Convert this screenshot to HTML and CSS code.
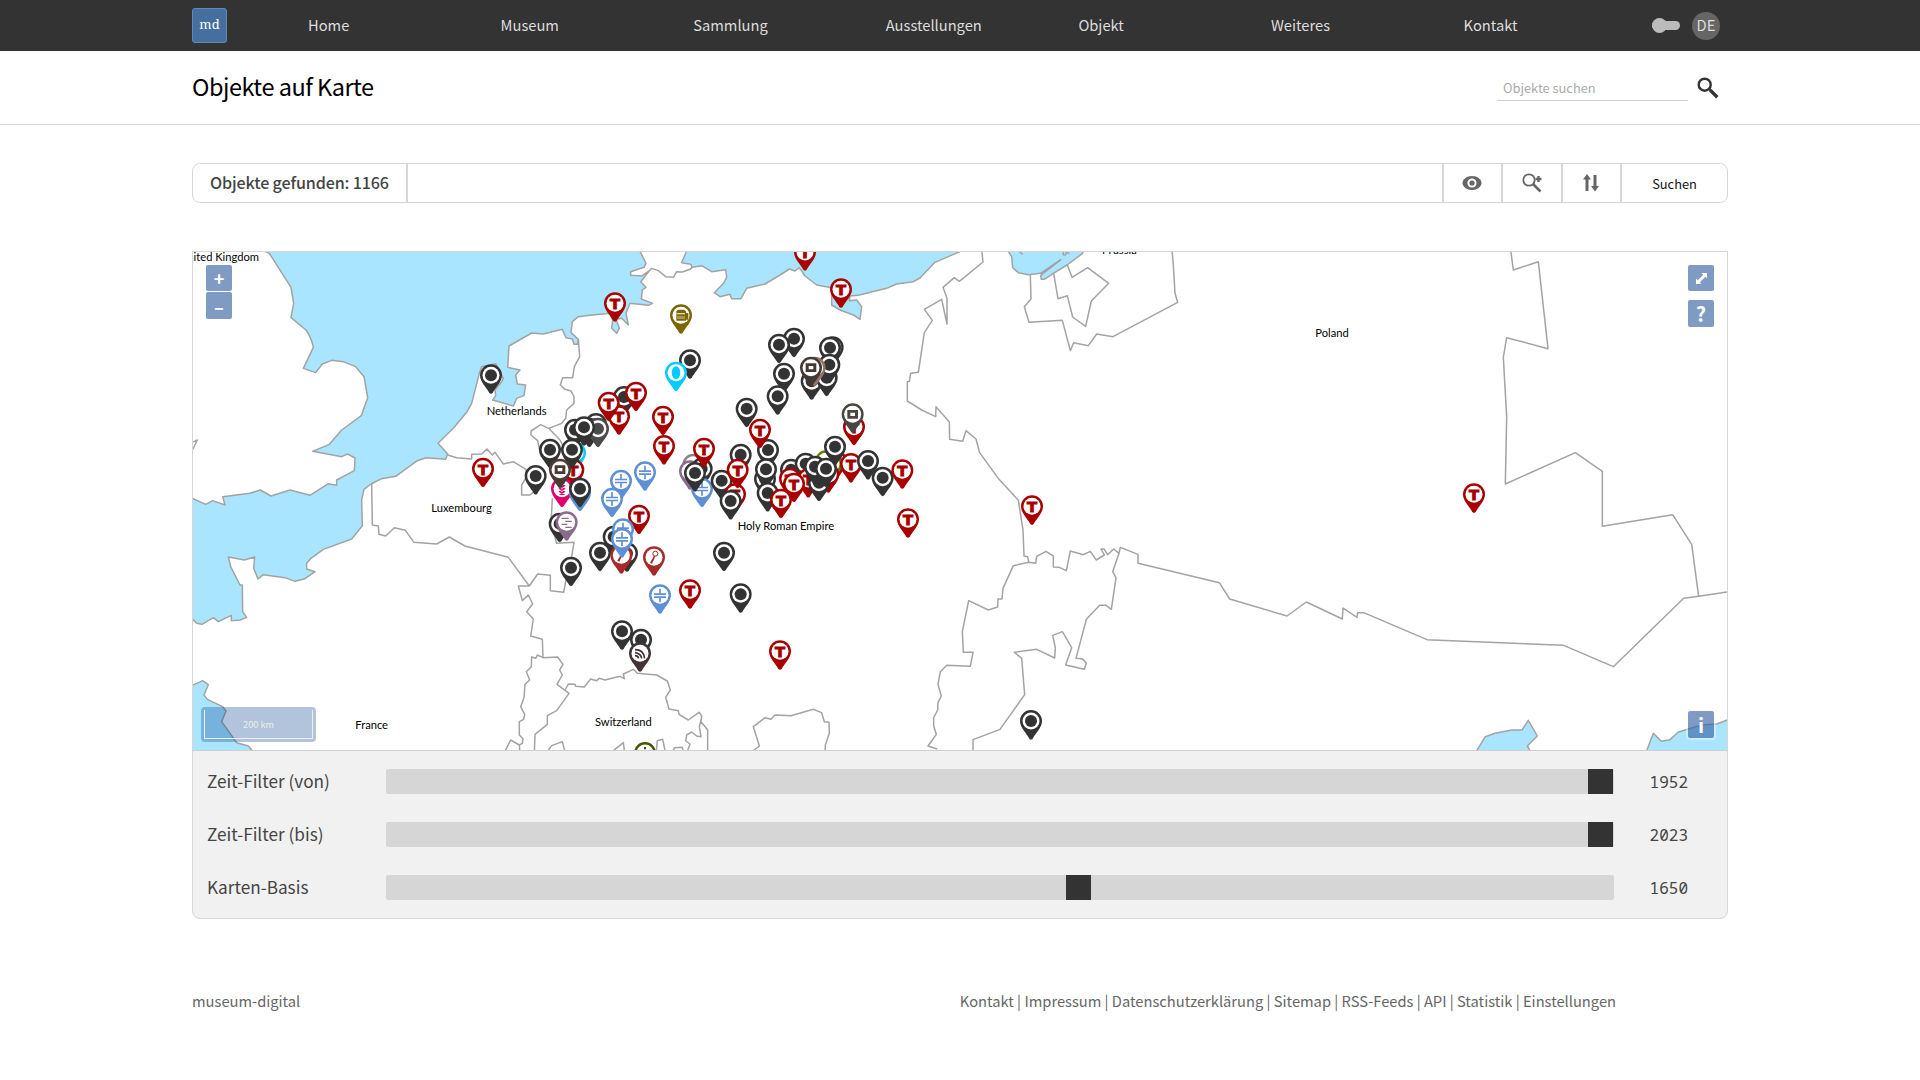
FILE: index.html
```html
<!DOCTYPE html>
<html lang="de">
<head>
<meta charset="utf-8">
<title>Objekte auf Karte</title>
<link rel="stylesheet" href="styles.css">
</head>
<body>
<header class="topbar">
  <a class="logo">md</a>
  <nav class="nav"><a>Home</a><a>Museum</a><a>Sammlung</a><a>Ausstellungen</a><a>Objekt</a><a>Weiteres</a><a>Kontakt</a></nav>
  <div class="tools"><span class="toggle"></span><span class="lang">DE</span></div>
</header>
<section class="titlebar">
  <h1>Objekte auf Karte</h1>
  <form class="quick"><input type="text" placeholder="Objekte suchen">
    <svg class="quick-icon" width="22" height="22" viewBox="0 0 22 22" fill="none" stroke="#333"><circle cx="7.7" cy="7.7" r="6" stroke-width="2.4"/><path d="M12 12l2 2" stroke-width="2.2"/><path d="M13.3 13.3l7 7" stroke-width="3.4"/></svg>
  </form>
</section>
<main class="main">
  <div class="searchbar">
    <div class="count">Objekte gefunden: 1166</div>
    <div class="field"></div>
    <div class="tool"><svg width="20" height="16" viewBox="0 0 20 16"><path fill="#666" d="M10 1C4.500 1 .5 4.500.5 8s4 7 9.500 7 9.500-3.500 9.500-7-4-7-9.500-7z"/><circle cx="10" cy="8" r="4.600" fill="#fff"/><circle cx="10" cy="8" r="2.600" fill="#666"/></svg></div>
    <div class="tool"><svg width="20" height="20" viewBox="0 0 20 20" fill="none" stroke="#666"><circle cx="7" cy="7" r="5.700" stroke-width="1.800"/><path d="M11 11l7.500 7.500" stroke-width="2.600"/><path d="M16.500 3v6M13.500 6h6" stroke-width="2.400"/></svg></div>
    <div class="tool"><svg width="16" height="18" viewBox="0 0 16 18" fill="#666"><path d="M4 0l4 5.500H5.500V17h-3V5.500H0zM12 17.500l-4-5.500h2.500V1h3v11H16z"/></svg></div>
    <div class="submit">Suchen</div>
  </div>
  <section class="mapbox">
    <div class="map">
      <svg class="mapsvg" viewBox="9 6 4602 1494">
        <defs>
          <g id="pin"><path d="M-33 0A33 33 0 1 1 33 0C33 20 14 36 5 53Q0 58-5 53C-14 36-33 20-33 0Z"/><circle r="25.500" fill="#fff"/></g>
          <g id="o"><use href="#pin"/><circle r="18"/></g>
          <g id="t" fill="#a80000"><use href="#pin"/><text class="pin-letter" y="18">T</text></g>
          <g id="plus" fill="#5f90d6"><use href="#pin"/><path d="M-2.500-20h5v16h-5zM-2.500 5h5v16h-5zM-18-6h36v5h-36zM-18 3h36v5h-36z"/></g>
          <g id="box"><use href="#pin"/><path fill-rule="evenodd" d="M-16-13h32v26h-32zM-7-5v10h14v-10z"/></g>
          <g id="loupe" fill="#a52a2a"><use href="#pin"/><circle cx="4" cy="-11" r="7.500" fill="none" stroke="#a52a2a" stroke-width="3"/><path d="M0-5l4 2-10 22-6-3z"/></g>
        </defs>
        <g class="sea">
          <path d="M215 0L238 10 303 112 311 160 303 203 348 240Q365 265 370 292L340 355 377 368 397 342 425 331 460 335 497 350 522 380 533 443 514 497 455 540 418 583 368 604 455 620 473 612 495 624 493 662 440 690V706L415 701 360 736 300 720 243 738 211 720 180 730 98 740 105 765 68 752 47 763 0 742V1100L20 1120 36 1123 70 1103 85 1115 124 1096V1112L150 1110 170 1102 158 1085 157 1005H150L122 950 115 921 163 930 194 921 191 955 204 987 220 974 285 983 315 994 345 986 375 965 350 957V940L363 925 400 898 485 867 517 827 515 750 522 718 543 702 575 686 617 679 682 632 708 623 767 628 773 612 744 580 790 535 830 487 845 460 868 370 875 350 917 341 940 385 935 395 915 420 917 437 908 450 970 468 980 445 1002 437 1007 405 982 402 977 375 990 360 953 352 957 288 1025 249 1060 252 1117 238 1128 263 1147 267 1152 283H1162L1165 268 1143 248 1147 215 1165 200 1200 196 1260 190 1268 210 1265 235 1280 250 1288 235 1278 208 1295 205 1315 225 1308 190 1320 160 1375 166 1388 160 1354 147 1357 120 1368 112 1352 95 1378 62 1355 78 1322 76V65L1362 52 1368 40 1348 0Z"/>
          <path d="M1487 0V10L1475 38 1502 43 1507 52 1535 47 1565 65 1607 59 1610 82 1602 98 1573 128 1590 140 1620 133 1625 146H1653L1670 115 1725 102 1775 72 1798 57 1815 63 1828 53 1845 78 1880 105 1925 113 1925 165 1950 180 1990 195 2010 208 2015 170 2000 150 1978 152 1980 138 2005 136 2090 115 2120 102 2170 95 2190 84 2235 37 2275 20 2320 0Z"/>
          <path d="M2452 0L2465 20 2468 53 2485 68 2515 74 2552 70 2612 29 2552 76 2554 88H2563L2590 70 2631 45 2678 10V0Z"/>
          <path d="M0 1309L38 1292 55 1304 42 1335 52 1348 98 1370 108 1383 95 1415 140 1478 175 1488 194 1510H0Z"/>
          <path d="M3855 1510L3886 1460 3915 1450 3965 1440H3996L4015 1411 4042 1458 4012 1488 4025 1510ZM4367 1510L4390 1450 4414 1474 4440 1469 4465 1446 4535 1425 4580 1422 4620 1407V1510Z"/>
        </g>
        <g class="borders">
          <path d="M0 615L22 570 0 580M773 615L800 623 845 627V613L875 612 891 597 907 615 915 607 940 642 970 635 1008 658 1010 680 995 705V735H1020L1060 700M545 702L547 825 565 828 567 853 587 858 613 833 646 841 672 877 740 882 778 861 825 888 955 922 1018 1008H985L997 1052 1015 1035 1028 1062 1010 1085 1030 1107 1022 1158 1057 1168 1059 1223M1018 1008L1043 972 1081 976V1022L1121 1027 1128 990 1145 920 1152 877 1100 880 1083 820 1087 745M1165 268L1169 320 1153 350 1148 383H1118L1111 405 1125 418 1143 423 1152 440V460L1130 480 1127 505 1115 520 1076 535 1052 524 1023 543V555L1043 572 1053 620M1076 535L1110 570 1125 600"/>
          <path d="M1059 1223L1103 1221 1119 1243 1109 1260 1117 1275 1101 1303 1137 1330 1100 1382 1072 1397V1423L1035 1453 1033 1510M1059 1223L1042 1215 1037 1225 1025 1221 1024 1250 1009 1265 1019 1290 1005 1303 1002 1343 992 1370 1004 1393 1001 1408 988 1415V1455L999 1466 997 1480 988 1485 962 1470 942 1510M988 1485L990 1510M1068 1510L1085 1487 1117 1475 1126 1510"/>
          <path d="M1378 62L1385 55 1405 62 1427 80 1450 82 1460 65 1477 66 1500 58 1507 52"/>
          <g transform="translate(990 930)"><path d="M135 390L145 372 165 373 167 379 193 381 212 357 230 362 238 355 255 360 300 349 313 356 310 342 340 328 352 340 410 345 442 363 451 390 437 412 447 447 475 452 477 463 505 480 537 457 545 467 543 485 563 510V580M543 480L538 500 543 530 530 528 515 516 500 525 497 543 510 552 500 580M459 580L463 563 487 562 492 580M408 580L412 542 428 538 437 580M270 580L310 548 314 580M690 580L718 558 700 500 735 473 753 478 765 465 813 467 880 448 905 458 913 485 927 487 928 520 916 555 915 580"/></g>
          <g transform="translate(2130 0)"><path d="M245 0L249 36 178 94 163 83 129 112 141 145V222L125 148 73 178 97 211 73 248 55 367 32 370 28 394 22 395V453L65 480 107 500 108 470 148 516 149 568 188 574 198 542 228 567 239 608 297 688 355 751 369 840 372 918 383 920 386 937M391 75L393 147 373 170 387 217 487 211 511 302 521 278 565 287 590 252 639 260 833 157 825 130 820 45 816 0M461 70L474 146 502 137 518 201 557 229 574 153 626 100 563 53 516 82 501 42M355 2L368 13M425 70L482 30M490 4V15L497 14 500 4 508 12"/></g>
          <g transform="translate(2130 750)"><path d="M386 187L407 190 410 169 438 154 460 168V201L478 202 499 212 511 153 550 164 571 154 589 180 613 165 603 147H612L623 164 641 147 657 160 638 215 648 233 634 328 618 316H599L559 358 528 475 547 476 559 490 553 508 497 495 515 443 487 395 458 406 466 444 464 474 410 448 343 457 365 475 374 584 300 688 219 719V760M657 160L661 142 714 163V190L958 248 989 297 1161 348 1219 306 1327 357 1329 324 1371 352 1373 338H1391L1581 419 1991 436 2140 500 2351 295 2396 289 2490 275M386 187L340 197 309 265 306 297H294L293 321 265 330 206 302 187 395 190 457H219L211 499 140 496 121 515 114 553 124 588 114 608 113 630 101 653V678L109 703 84 738 112 747"/></g>
          <g transform="translate(3390 0)"><path d="M1136 1039L1115 883 1058 794 847 829V664L766 608 556 702 560 500 550 322 560 263 684 296 655 35 580 60 572 0"/></g>
        </g>
        <g class="places">
          <text class="from-west" x="207" y="33">United Kingdom</text><text x="890" y="495">Netherlands</text><text x="724" y="786">Luxembourg</text><text x="496" y="1437">France</text><text x="1215" y="1428">Switzerland</text><text x="1643" y="841">Holy Roman Empire</text><text x="2736" y="13">Prussia</text><text x="3376" y="261">Poland</text>
        </g>
        <g class="pins">
          <use href="#o" x="903" y="376"/><use href="#t" x="879" y="656"/><use href="#t" x="2526" y="769"/><use href="#o" x="2523" y="1413"/><use href="#t" x="3852" y="733"/>
          <g transform="translate(990 1)">
            <use href="#t" x="855" y="5"/><use href="#t" x="963" y="117"/><use href="#t" x="285" y="159"/>
            <g transform="translate(483 195)" fill="#7d6500"><use href="#pin"/><path d="M-14-12l5-5h18l6 5v4l7 2V13h-7v3h-29zM-13-6v3h25v-3z" fill-rule="evenodd"/><path d="M-9 2v9M-3 2v9M3 2v9M9 2v9" stroke="#fff" stroke-width="2"/></g>
            <use href="#o" x="510" y="330"/>
            <g transform="translate(468 367)" fill="#00ccff"><use href="#pin"/><ellipse rx="13" ry="19"/></g>
            <use href="#o" x="822" y="265"/><use href="#o" x="777" y="283"/><use href="#o" x="938" y="291"/><use href="#o" x="930" y="292"/>
            <use href="#o" x="792" y="370"/><use href="#o" x="773" y="438"/><use href="#o" x="875" y="393"/><use href="#o" x="920" y="382"/><use href="#o" x="928" y="343"/>
            <use href="#box" x="884" y="352" fill="#8f7468"/><use href="#box" x="873" y="352" fill="#443833"/>
            <use href="#o" x="312" y="440"/><use href="#t" x="348" y="427"/><use href="#t" x="297" y="498"/><use href="#t" x="266" y="457"/>
            <use href="#t" x="429" y="499"/><use href="#t" x="432" y="587"/>
            <use href="#o" x="165" y="538"/><use href="#o" x="228" y="521"/><use href="#o" x="208" y="535"/><use href="#o" x="234" y="535" fill="#4b4b4b"/><use href="#o" x="192" y="531"/>
            <use href="#o" x="47" y="677"/><use href="#o" x="90" y="598"/>
            <g transform="translate(165 607)" fill="#00ccff"><use href="#pin"/></g>
            <use href="#t" x="160" y="658"/><use href="#o" x="156" y="598"/>
            <g transform="translate(126 715)" fill="#e0006c"><use href="#pin"/><path d="M-7-18L7-9-7 0 7 9-7 18M7-18L-7-9 7 0-7 9 7 18" fill="none" stroke="#e0006c" stroke-width="4"/></g>
            <use href="#box" x="120" y="658" fill="#4a3c34"/>
            <use href="#plus" x="180" y="727"/><use href="#o" x="180" y="715"/>
            <use href="#plus" x="375" y="666"/><use href="#plus" x="303" y="691"/><use href="#plus" x="276" y="745"/><use href="#t" x="357" y="796"/>
            <use href="#o" x="119" y="820"/>
            <g transform="translate(140 816)" fill="#8c6a8c"><use href="#pin"/><path d="M-15-14H6v4h-21zM-4-5h19v4H-4zM-15 4H2v4h-17zM-4 13h19v4H-4z"/></g>
            <use href="#o" x="153" y="952"/><use href="#o" x="240" y="907"/><use href="#o" x="321" y="909"/><use href="#o" x="281" y="859"/><use href="#loupe" x="304" y="915"/><use href="#loupe" x="402" y="921"/><use href="#plus" x="309" y="837"/><use href="#plus" x="306" y="866"/>
            <use href="#o" x="612" y="907"/><use href="#plus" x="420" y="1035"/><use href="#t" x="510" y="1020"/><use href="#o" x="662" y="1032"/><use href="#o" x="306" y="1143"/><use href="#o" x="363" y="1168"/>
            <g transform="translate(360 1209)" fill="#433336"><use href="#pin"/><path d="M-15-11Q11-11 14 15M-15-2Q2 0 5 15M-15 7Q-6 7-4 15" fill="none" stroke="#433336" stroke-width="5"/></g>
            <use href="#t" x="780" y="1203"/>
            <g transform="translate(375 1508)" fill="#465500"><use href="#pin"/><path d="M-3-18h6v7h-6zM-9-7h18v7h-18z"/></g>
            <use href="#pin" x="520" y="643" fill="#8e8089"/><use href="#pin" x="510" y="663" fill="#8c6a8c"/><use href="#o" x="545" y="655"/><use href="#plus" x="546" y="715"/><use href="#o" x="525" y="668"/><use href="#t" x="552" y="595"/>
            <use href="#o" x="662" y="613"/><use href="#o" x="605" y="691"/><use href="#t" x="645" y="732"/><use href="#t" x="653" y="658"/><use href="#o" x="632" y="752"/>
            <use href="#o" x="680" y="475"/><use href="#o" x="744" y="599"/><use href="#t" x="720" y="538"/><use href="#o" x="735" y="686"/><use href="#o" x="738" y="657"/><use href="#o" x="743" y="728"/>
            <use href="#o" x="813" y="658"/><use href="#o" x="857" y="640"/><use href="#t" x="865" y="686"/><use href="#t" x="810" y="685"/>
            <use href="#t" x="948" y="632"/><use href="#pin" x="933" y="641" fill="#658000"/><use href="#pin" x="918" y="633" fill="#658000"/><use href="#t" x="925" y="672"/><use href="#o" x="897" y="697"/><use href="#o" x="885" y="649"/><use href="#o" x="918" y="655"/><use href="#o" x="945" y="589"/>
            <use href="#t" x="822" y="700"/><use href="#t" x="783" y="748"/>
            <use href="#t" x="1002" y="529"/><use href="#box" x="998" y="492" fill="#494540"/><use href="#t" x="993" y="641"/><use href="#o" x="1044" y="632"/><use href="#o" x="1088" y="682"/><use href="#t" x="1147" y="660"/><use href="#t" x="1164" y="807"/>
          </g>
        </g>
      </svg>
      <div class="zoom"><button>+</button><button>–</button></div>
      <button class="ctl full"><svg width="13" height="13" viewBox="0 0 13 13"><path d="M6.500 1H12v5.500L10.300 4.800 4.800 10.300 6.500 12H1V6.500l1.700 1.700L8.200 2.700z" fill="#fff"/></svg></button>
      <button class="ctl help">?</button>
      <button class="ctl info">i</button>
      <div class="scale"><div>200 km</div></div>
    </div>
    <div class="filters">
      <div class="row"><label>Zeit-Filter (von)</label><div class="track end"><i></i></div><output>1952</output></div>
      <div class="row"><label>Zeit-Filter (bis)</label><div class="track end"><i></i></div><output>2023</output></div>
      <div class="row"><label>Karten-Basis</label><div class="track mid"><i></i></div><output>1650</output></div>
    </div>
  </section>
</main>
<footer class="footer"><span>museum-digital</span><span class="links">Kontakt | Impressum | Datenschutzerklärung | Sitemap | RSS-Feeds | API | Statistik | Einstellungen</span></footer>
</body>
</html>
```
FILE: styles.css
```css
* { box-sizing: border-box; }
body { margin: 0; background: #fff; color: #444; font: 14.700px/24px "Noto Sans CJK JP", "Noto Sans CJK SC", sans-serif; }
button { border: 0; padding: 0; font: inherit; }
.topbar { display: flex; align-items: center; height: 51px; padding: 0 200px 0 192px; background: #333; color: #ddd; }
.logo { flex: none; width: 35px; height: 35px; border: 1px solid #5f8bb8; border-radius: 3px; background: #446f9f; color: #fff; font: 13px/31px "Noto Serif", "DejaVu Serif", serif; text-align: center; }
.nav { display: flex; flex: none; margin-left: 81px; }
.nav a { width: 192.600px; line-height: 22px; padding-bottom: 2px; }
.nav a:last-child { width: auto; }
.tools { display: flex; align-items: center; gap: 12px; margin-left: auto; }
.toggle { width: 28px; height: 9px; border-radius: 5px; background: #bbb; display: flex; align-items: center; }
.toggle::before { content: ""; width: 15px; height: 15px; border-radius: 50%; background: #bbb; flex: none; }
.lang { width: 28px; height: 28px; border-radius: 50%; background: #666; line-height: 26px; text-align: center; }
.titlebar { display: flex; justify-content: space-between; align-items: center; height: 74px; padding: 0 201px 0 192px; border-bottom: 1px solid #d6d6d6; }
h1 { margin: 0; padding-bottom: 4px; font-size: 23.500px; letter-spacing: -.5px; line-height: 32px; font-weight: 400; color: #000; }
.quick { display: flex; align-items: center; gap: 9px; }
.quick input { width: 191px; height: 26px; border: 0; border-bottom: 1px solid #d0d0d0; padding: 1px 7px 0 6px; font: 12.850px/24px "Noto Sans CJK JP", sans-serif; }
.quick input::placeholder { color: #aaa; }
.main { width: 1536px; margin: 38px auto 0; }
.searchbar { display: flex; height: 40px; border: 1px solid #d6d6d6; border-radius: 8px; }
.count { width: 215px; padding-left: 17px; border-right: 2px solid #d6d6d6; font-size: 16.100px; letter-spacing: -.130px; line-height: 37px; font-weight: 500; white-space: nowrap; }
.field { flex: 1; }
.tool { display: flex; align-items: center; justify-content: center; width: 59.500px; border-left: 2px solid #d6d6d6; }
.submit { width: 107px; border-left: 2px solid #d6d6d6; font-size: 12.850px; line-height: 39px; text-align: center; color: #111; }
.mapbox { margin-top: 48px; border: 1px solid #d6d6d6; border-radius: 0 0 8px 8px; background: #f1f1f1; overflow: hidden; }
.map { position: relative; height: 499px; border-bottom: 1px solid #d0d0d0; background: #fff; overflow: hidden; }
.mapsvg { display: block; width: 1534px; height: 498px; }
.sea path { fill: #aae5ff; stroke: #a3a3a3; stroke-width: 4.500; stroke-linejoin: round; }
.borders path { fill: none; stroke: #a3a3a3; stroke-width: 4.500; stroke-linejoin: round; }
.places text { font: 33.500px Lato, sans-serif; fill: #000; }
.places .from-west { text-anchor: end; }
.pins { fill: #333; }
.pin-letter { font: bold 44px "DejaVu Sans", sans-serif; text-anchor: middle; stroke: #a80000; stroke-width: 3; }
.zoom { position: absolute; left: 13px; top: 13px; display: grid; gap: 1px; }
.zoom button, .ctl { width: 26px; height: 27px; border-radius: 2px; background: #7f9bc4; color: #fff; font-weight: 700; font-size: 18px; line-height: 26px; text-align: center; }
.zoom button:first-child { height: 26px; }
.ctl { position: absolute; right: 13px; display: flex; align-items: center; justify-content: center; }
.full { top: 13px; height: 26px; }
.help { top: 48px; font-size: 20px; }
.info { bottom: 12px; font-size: 20px; background: rgba(58, 101, 163, .65); box-shadow: 0 0 0 2px rgba(255, 255, 255, .4); }
.scale { position: absolute; left: 8px; bottom: 8px; width: 115px; height: 35px; padding: 3px; border-radius: 4px; background: rgba(0, 60, 136, .3); }
.scale div { height: 29px; border: 1px solid #eee; border-top: 0; color: #eee; font: 9.200px/28px "Noto Sans CJK JP", sans-serif; text-align: center; }
.filters { display: grid; gap: 28px; padding: 18px 39px 18px 14px; }
.row { display: flex; align-items: center; height: 25px; font-size: 17.200px; }
.row label { width: 179px; padding-bottom: 2px; }
.track { width: 1228px; height: 25px; border-radius: 2px; background: #d6d6d6; display: flex; }
.track i { width: 25px; background: #333; }
.end { justify-content: flex-end; padding-right: 1px; }
.mid { padding-left: 680px; }
output { margin-left: auto; padding-top: 1px; font: 16px/25px "Noto Sans Mono", "DejaVu Sans Mono", monospace; }
.footer { display: flex; justify-content: space-between; width: 1424px; margin: 70px 0 0 192px; color: #666; }
```
